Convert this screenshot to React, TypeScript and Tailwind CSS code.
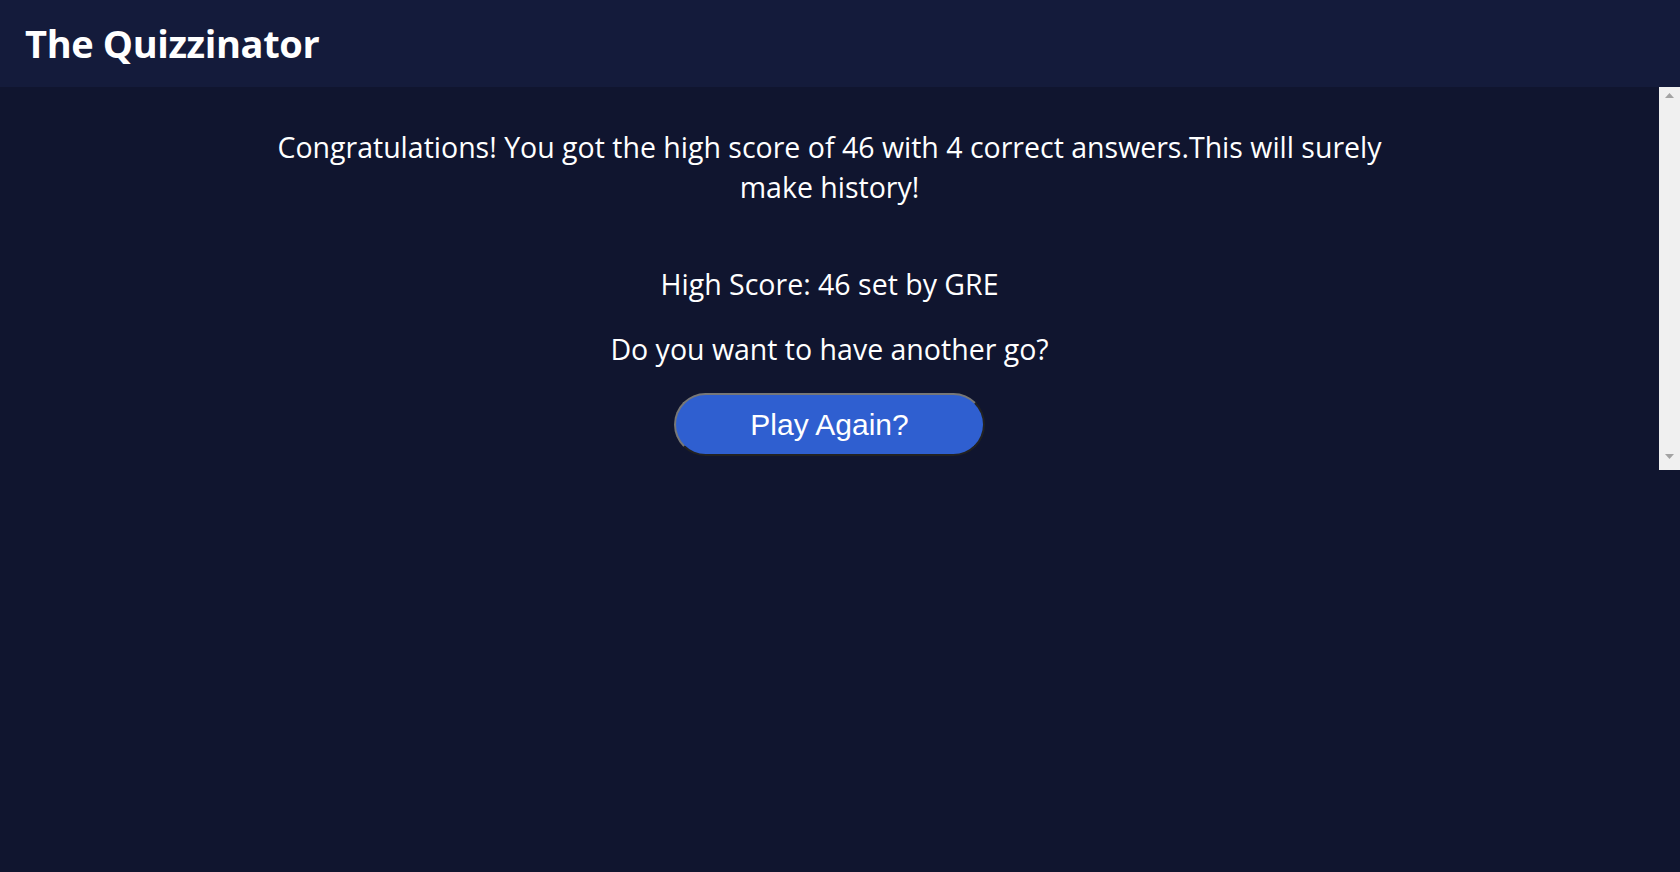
import React from 'react';

function ScrollArrow({ down }: { down?: boolean }) {
  return (
    <svg width="9" height="6" viewBox="0 0 9 6" className="mx-auto">
      {down ? <polygon points="0,0 9,0 4.5,5" fill="#a3a3a3" /> : <polygon points="0,5 9,5 4.5,0" fill="#a3a3a3" />}
    </svg>
  );
}

export default function App() {
  const score = 46;
  const correct = 4;
  const message = `Congratulations! You got the high score of ${score} with ${correct} correct answers.This will surely make history!`;

  return (
    <div className="min-h-[872px] bg-[#10152f] text-white font-['Open_Sans','Noto_Sans',sans-serif]">
      <header className="h-[87px] bg-[#141b3b] flex items-center px-[25px]">
        <h1 className="text-[38px] font-bold tracking-[-0.01em]">The Quizzinator</h1>
      </header>

      <div className="flex h-[383px]">
        {/* Results */}
        <main className="flex-1 flex flex-col items-center">
          <p className="w-[1150px] mt-[40px] text-center text-[28.5px] leading-[40px]">{message}</p>
          <p className="mt-[57px] text-[28.5px] leading-[40px]">{`High Score: ${score} set by GRE`}</p>
          <p className="mt-[25px] text-[28.5px] leading-[40px]">Do you want to have another go?</p>
          <button className="mt-[24px] w-[311px] h-[63px] rounded-full bg-[#2f5fd0] border-2 [border-style:outset] border-[#777] text-[30px] font-['Liberation_Sans',Arial,sans-serif]">
            Play Again?
          </button>
        </main>

        {/* scrollbar */}
        <div className="w-[21px] bg-[#f0f0f0] flex flex-col justify-between pt-[6px] pb-[10px]">
          <ScrollArrow />
          <ScrollArrow down />
        </div>
      </div>
    </div>
  );
}
